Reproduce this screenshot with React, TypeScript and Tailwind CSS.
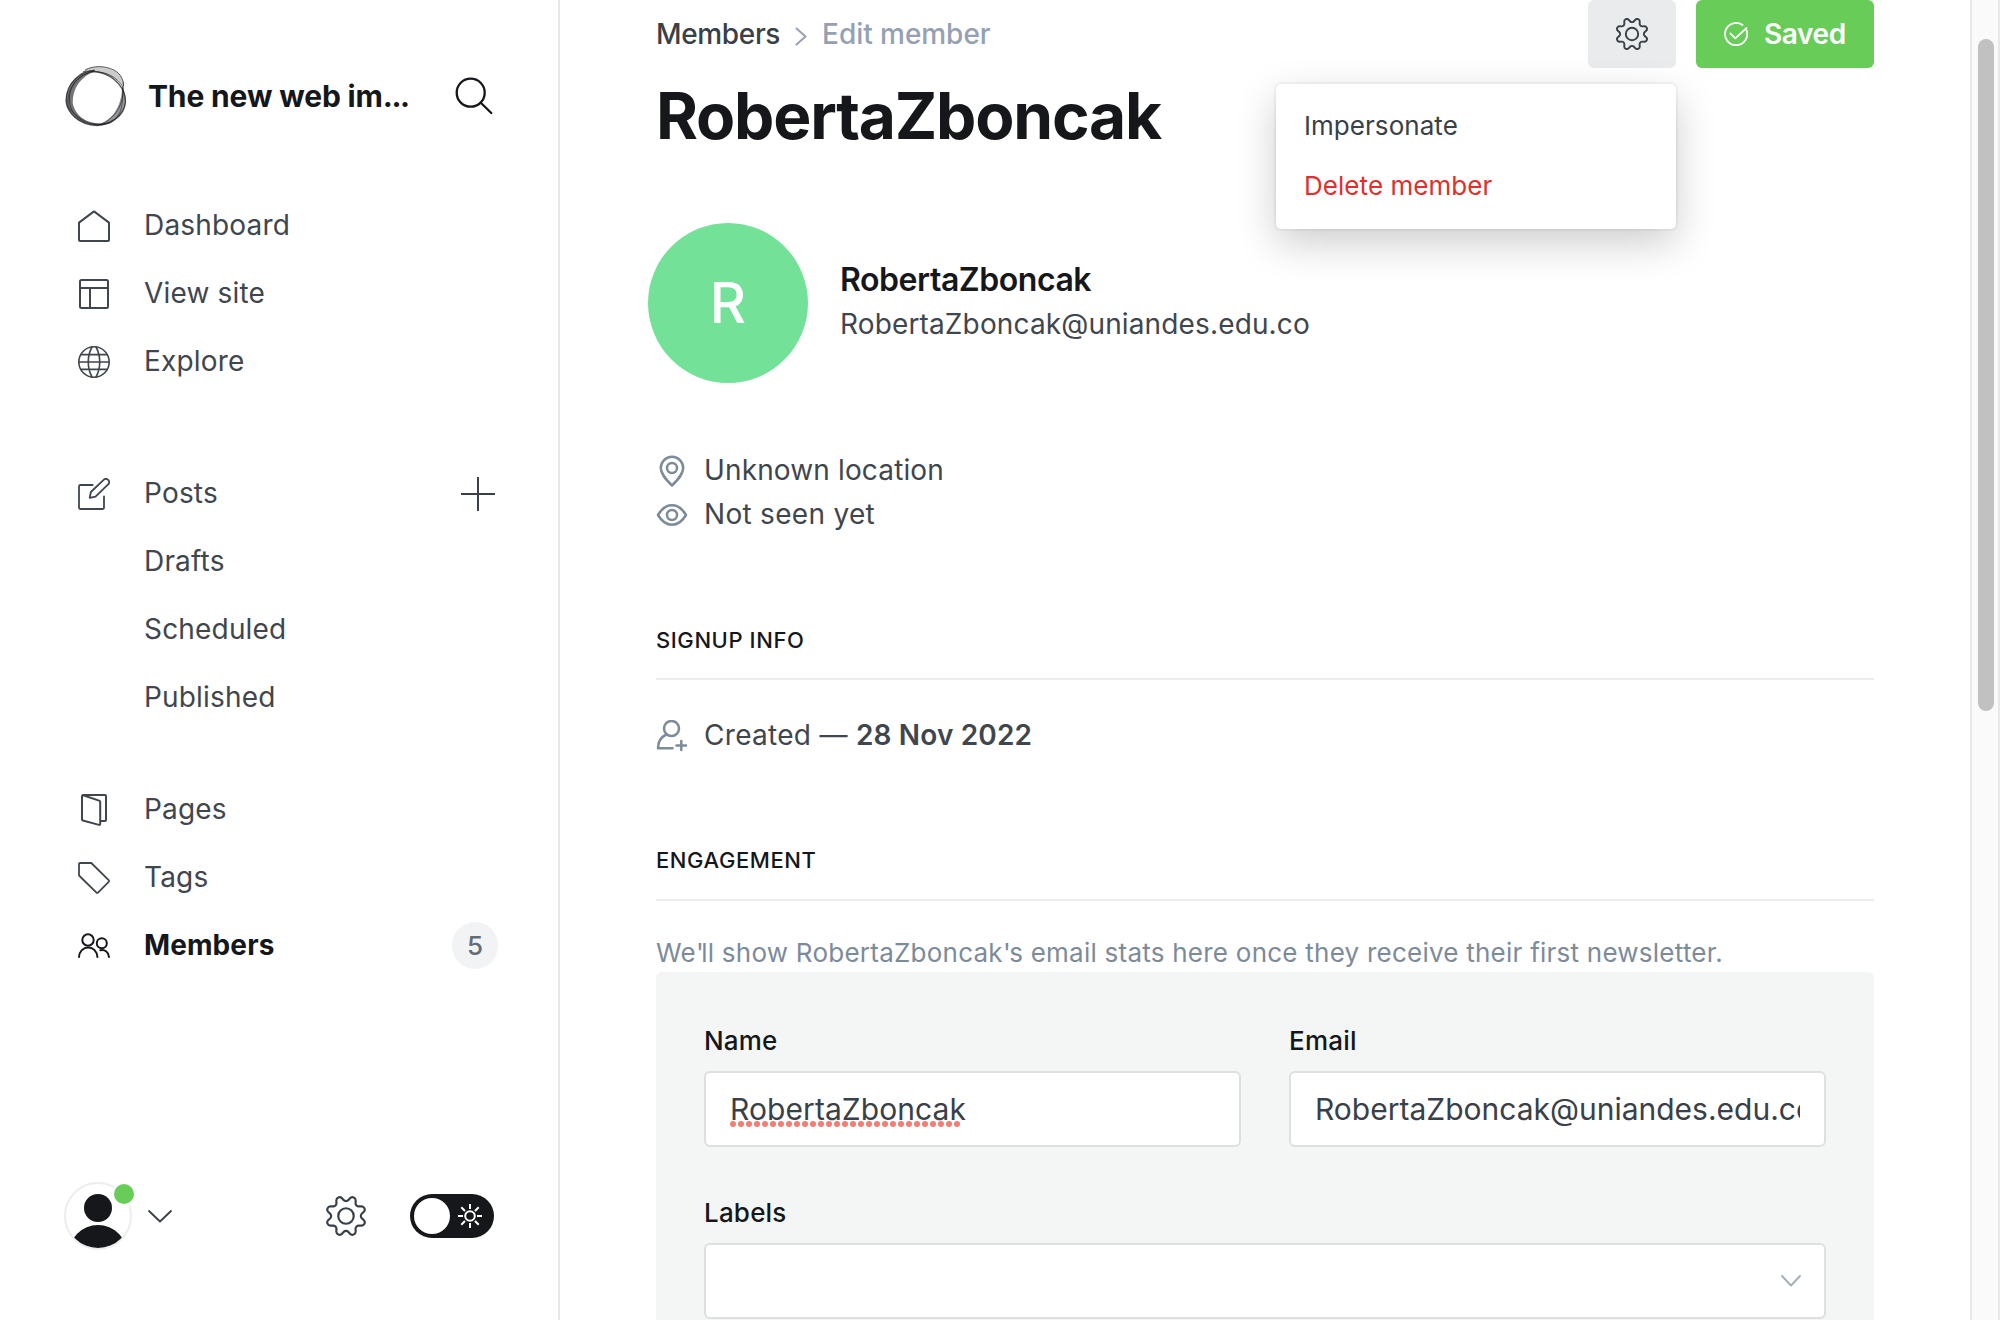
import type { ReactNode } from "react";

const COG =
  "M10.546,2.438a1.957,1.957,0,0,0,2.908,0L14.4,1.4a1.959,1.959,0,0,1,3.41,1.413l-.071,1.4A1.958,1.958,0,0,0,19.79,6.265l1.4-.071A1.959,1.959,0,0,1,22.6,9.6l-1.04.942a1.962,1.962,0,0,0,0,2.909l1.04.942a1.959,1.959,0,0,1-1.413,3.41l-1.4-.071a1.958,1.958,0,0,0-2.056,2.056l.071,1.4A1.959,1.959,0,0,1,14.4,22.6l-.941-1.041a1.959,1.959,0,0,0-2.908,0L9.606,22.6A1.959,1.959,0,0,1,6.2,21.192l.072-1.4a1.958,1.958,0,0,0-2.056-2.056l-1.4.071A1.958,1.958,0,0,1,1.4,14.4l1.041-.942a1.96,1.96,0,0,0,0-2.909L1.4,9.606A1.958,1.958,0,0,1,2.813,6.2l1.4.071A1.958,1.958,0,0,0,6.269,4.211L6.2,2.809A1.959,1.959,0,0,1,9.606,1.4Z";

function Cog({ className, stroke }: { className: string; stroke: number }) {
  return (
    <svg viewBox="0 0 24 24" className={className} fill="none" stroke="currentColor" strokeWidth={stroke} strokeLinejoin="round">
      <path d={COG} />
      <circle cx="12" cy="12" r="4.650" />
    </svg>
  );
}

function NavSvg({ children }: { children: ReactNode }) {
  return (
    <svg viewBox="0 0 32 32" className="h-8 w-8" fill="none" stroke="currentColor" strokeWidth="2" strokeLinecap="round" strokeLinejoin="round">
      {children}
    </svg>
  );
}

const HomeIcon = (
  <NavSvg>
    <path d="M1 12.6 16 1.4 31 12.6V30a1 1 0 0 1-1 1H2a1 1 0 0 1-1-1Z" />
  </NavSvg>
);
const LayoutIcon = (
  <NavSvg>
    <rect x="2" y="2" width="28" height="28" rx="1.5" />
    <path d="M2 10h28M12 10v20" />
  </NavSvg>
);
const GlobeIcon = (
  <NavSvg>
    <g strokeWidth="1.6">
      <circle cx="16" cy="16" r="15.200" />
      <path d="M14 1C9 10 9 22 14 31M18 1c5 9 5 21 0 30M1 16h30M3 8.600h26M3 23.400h26" />
    </g>
  </NavSvg>
);
const PencilIcon = (
  <NavSvg>
    <g strokeWidth="1.800">
      <path d="M14.600 7H2.500A1.500 1.500 0 0 0 1 8.500V29.500A1.500 1.500 0 0 0 2.500 31H24.500A1.500 1.500 0 0 0 26 29.500V18.500" />
      <path d="m17.500 18.600-5.800 1.200 1.200-5.800L25.600 1.900a3.100 3.100 0 0 1 4.500 4.500Z" />
    </g>
  </NavSvg>
);
const PagesIcon = (
  <NavSvg>
    <path d="M23 27h4a1 1 0 0 0 1-1V2a1 1 0 0 0-1-1H5" />
    <path d="M4 2.300V25.500a1 1 0 0 0 .8 1l16.200 4.400a1 1 0 0 0 1.200-1V8a1.500 1.500 0 0 0-1.100-1.400L5.200 1.200A1 1 0 0 0 4 2.300Z" />
  </NavSvg>
);
const TagIcon = (
  <NavSvg>
    <g strokeWidth="1.800">
      <path d="M2 1h11.300L30.700 18.200a1.200 1.200 0 0 1 0 1.700L20 30.600a1 1 0 0 1-1.500 0L1.500 14A1.500 1.500 0 0 1 1 13V2A1 1 0 0 1 2 1Z" />
    </g>
  </NavSvg>
);
const MembersIcon = (
  <NavSvg>
    <circle cx="10" cy="10" r="5.700" />
    <path d="M1 27c.3-5.500 4.200-9.600 9.200-9.600s8.900 4.100 9.200 9.600" />
    <circle cx="23.800" cy="13.300" r="5" />
    <path d="M22.300 20.300c4.800-1 8.400 2 8.700 6.700" />
  </NavSvg>
);

function NavItem({ icon, label, active, trailing }: { icon?: ReactNode; label: string; active?: boolean; trailing?: ReactNode }) {
  return (
    <li className={active ? "flex h-[68px] items-center pl-[78px] text-[#15171a]" : "flex h-[68px] items-center pl-[78px] text-[#3f464e]"}>
      <span className="mt-0.5 h-8 w-8 shrink-0">{icon}</span>
      <span className={active ? "ml-[34px] grow font-bold tracking-[0.1px]" : "ml-[34px] grow tracking-[0.18px]"}>{label}</span>
      {trailing}
    </li>
  );
}

function OrbLogo() {
  return (
    <svg viewBox="0 0 64 64" className="h-16 w-16" fill="none" stroke="#15171a">
      <g fill="#15171a" stroke="none">
        <path
          fillOpacity=".6"
          d="M31 6.500C18 6 2 18 2 37C3 48 14 61 33 61.500C40 61 45 59 50 55C42 60 36 60 30 59C18 58 9 46 8.700 38C9 24 16 14 31 6.500Z"
        />
        <path fillOpacity=".22" d="M21 5.500C30 1 40 1 50 6C58 10 60 16 60 22C56 18 50 10 31 8Z" />
        <path fillOpacity=".45" d="M58 22C64 34 64 48 51 56.500C46 60.500 40 61.500 33 61.500C45 58 58 46 58 22Z" />
      </g>
      <g strokeWidth=".9" strokeOpacity=".7">
        <path d="M21 6C30 1.500 40 1.500 50 6C57 10 59.500 16 59.500 22" />
        <path d="M31 6.500C18 6 2 18 2 37C3 48 14 61 33 61.500C46 61 60 52 61.500 38C61.500 26 53 12 34 8C28 7 24 6 19 8" strokeWidth="1.300" />
        <path d="M5.500 38C4 22 14 10 30 8C42 7 54 14 59 23C60 40 52 54 36 60.500C20 61 7 52 5.500 38Z" />
        <path d="M59.500 18C58 40 60 50 46 59C32 63 12 56 4 42C2 26 14 10 30 7" strokeWidth=".7" />
      </g>
    </svg>
  );
}

function Sidebar() {
  return (
    <nav className="flex h-full w-[560px] shrink-0 flex-col border-r-2 border-[#e7e8e9] text-[28px]">
      <header className="mt-16 flex h-16 items-center pl-16">
        <OrbLogo />
        <div className="ml-5 w-[262px] text-[30px] font-bold tracking-[-0.15px] whitespace-nowrap text-[#15171a]">
          The new web im<span className="tracking-[-1.4px]">...</span>
        </div>
        <svg viewBox="0 0 40 40" className="ml-[44px] h-10 w-10" fill="none" stroke="#15171a" strokeWidth="2.300" strokeLinecap="round">
          <circle cx="16.700" cy="16.700" r="14" />
          <path d="m27 27 10.300 10" />
        </svg>
      </header>
      <ul className="mt-[63px]">
        <NavItem icon={HomeIcon} label="Dashboard" />
        <NavItem icon={LayoutIcon} label="View site" />
        <NavItem icon={GlobeIcon} label="Explore" />
      </ul>
      <ul className="mt-16">
        <NavItem
          icon={PencilIcon}
          label="Posts"
          trailing={
            <svg viewBox="0 0 34 34" className="mt-0.5 mr-[63px] h-[34px] w-[34px]" stroke="#394047" strokeWidth="2">
              <path d="M17 0v34M0 17h34" />
            </svg>
          }
        />
        <NavItem label="Drafts" />
        <NavItem label="Scheduled" />
        <NavItem label="Published" />
      </ul>
      <ul className="mt-11">
        <NavItem icon={PagesIcon} label="Pages" />
        <NavItem icon={TagIcon} label="Tags" />
        <NavItem
          icon={MembersIcon}
          label="Members"
          active
          trailing={
            <span className="mt-px mr-[60px] flex h-[47px] w-[46px] items-center justify-center rounded-full bg-[#f1f3f4] text-[26px] font-medium text-[#626d79]">
              5
            </span>
          }
        />
      </ul>
      <footer className="mt-auto mb-[70px] flex h-[68px] items-center pl-16">
        <svg viewBox="0 0 70 68" className="h-[68px] w-[70px] shrink-0">
          <defs>
            <clipPath id="face">
              <circle cx="34" cy="34" r="32" />
            </clipPath>
          </defs>
          <circle cx="34" cy="34" r="33" fill="#fff" stroke="#ebedef" strokeWidth="2" />
          <circle cx="34" cy="26" r="14" fill="#15171a" />
          <circle cx="34" cy="72.500" r="29.500" fill="#15171a" clipPath="url(#face)" />
          <circle cx="60" cy="12" r="12" fill="#fff" />
          <circle cx="60" cy="12" r="10" fill="#68cc59" />
        </svg>
        <svg viewBox="0 0 24 14" className="ml-[14px] h-[14px] w-6" fill="none" stroke="#394047" strokeWidth="1.800" strokeLinecap="round" strokeLinejoin="round">
          <path d="m1 2 11 10.500L23 2" />
        </svg>
        <Cog className="ml-[154px] h-10 w-10 text-[#394047]" stroke={1.3} />
        <span className="ml-11 flex h-11 w-[84px] items-center rounded-full bg-[#15171a] pl-1">
          <span className="h-9 w-9 rounded-full bg-white" />
          <svg viewBox="0 0 24 24" className="ml-2 h-6 w-6" fill="none" stroke="#fff" strokeWidth="2">
            <circle cx="12" cy="12" r="4.800" />
            <path d="M12 0v5M12 19v5M0 12h5M19 12h5M3.300 3.300l3.700 3.700M17 17l3.700 3.700M3.300 20.700 7 17M17 7l3.700-3.700" />
          </svg>
        </span>
      </footer>
    </nav>
  );
}

function ActionsMenu() {
  return (
    <div className="absolute top-[84px] left-[1276px] h-[145px] w-[400px] rounded-[5px] bg-white pt-[11px] text-[26px] tracking-[0.05px] shadow-[0_0_0_2px_rgba(0,0,0,0.04),0_14px_40px_0_rgba(0,0,0,0.2)]">
      <div className="flex h-[60px] items-center pl-7 text-[#394047]">Impersonate</div>
      <div className="flex h-[60px] items-center pl-7 text-[#e02f2c]">Delete member</div>
    </div>
  );
}

function Meta({ icon, children }: { icon: ReactNode; children: ReactNode }) {
  return (
    <div className="flex h-11 items-center text-[28px] tracking-[0.2px] text-[#3f464e]">
      <svg viewBox="0 0 32 32" className="mt-0.5 mr-4 h-8 w-8 shrink-0" fill="none" stroke="#7c8b9a" strokeWidth="2.500" strokeLinecap="round" strokeLinejoin="round">
        {icon}
      </svg>
      <span>{children}</span>
    </div>
  );
}

function SectionTitle({ children, className }: { children: ReactNode; className: string }) {
  return (
    <h4 className={"flex h-[76px] items-start border-b-2 border-[#ebeced] text-[22px] leading-[40px] font-medium tracking-[0.58px] text-[#15171a] " + className}>
      {children}
    </h4>
  );
}

function Label({ children }: { children: ReactNode }) {
  return <div className="flex h-[38px] items-center text-[26px] font-medium tracking-[0.2px] text-[#15171a]">{children}</div>;
}

function Main() {
  return (
    <main className="h-full w-[1410px] shrink-0 overflow-hidden pr-24 pl-24">
      <header className="flex h-[68px] items-center text-[28px] font-medium">
        <span className="tracking-[-0.35px] text-[#394047]">Members</span>
        <svg viewBox="0 0 12 20" className="mx-[15px] mt-1 h-5 w-3" fill="none" stroke="#95a1b2" strokeWidth="2" strokeLinecap="round" strokeLinejoin="round">
          <path d="m1.500 2.500 9 8-9 8" />
        </svg>
        <span className="tracking-[-0.05px] text-[#95a1b2]">Edit member</span>
        <span className="ml-auto flex h-[68px] w-[88px] items-center justify-center rounded-[6px] bg-[#e9ebed]">
          <Cog className="h-8 w-8 text-[#394047]" stroke={1.45} />
        </span>
        <span className="ml-5 flex h-[68px] w-[178px] items-center rounded-[6px] bg-[#68cc59] pl-7 font-semibold tracking-[-0.4px] text-white">
          <svg viewBox="0 0 24 24" className="mr-4 h-6 w-6" fill="none" stroke="#fff" strokeWidth="1.800" strokeLinecap="round" strokeLinejoin="round">
            <path d="M22.500 8.200A11.100 11.100 0 1 1 18.500 3" />
            <path d="m6.300 11.500 5 4.800L22.500 6" />
          </svg>
          Saved
        </span>
      </header>
      <h1 className="flex h-24 items-center text-[64px] font-bold tracking-[-1.200px] text-[#15171a]">RobertaZboncak</h1>

      <section className="mt-[59px] -ml-2 flex h-40 items-center">
        <div className="flex h-40 w-40 items-center justify-center rounded-full bg-[#74e198] text-[56px] font-medium text-white">R</div>
        <div className="ml-8 pb-0.5">
          <h3 className="flex h-11 items-center text-[32px] font-semibold tracking-[-0.450px] text-[#15171a]">RobertaZboncak</h3>
          <p className="flex h-11 items-center text-[28px] tracking-[0.14px] text-[#3f464e]">RobertaZboncak@uniandes.edu.co</p>
        </div>
      </section>

      <section className="mt-[65px]">
        <Meta
          icon={
            <>
              <path d="M16 30.500C9 23.500 4.800 18.500 4.800 13a11.200 11.200 0 0 1 22.400 0c0 5.500-4.200 10.500-11.200 17.500Z" />
              <circle cx="16" cy="13" r="5" />
            </>
          }
        >
          <span className="tracking-[0.14px]">Unknown location</span>
        </Meta>
        <Meta
          icon={
            <>
              <path d="M2 16C5.500 10 10.500 6.300 16 6.300S26.500 10 30 16c-3.500 6-8.500 9.700-14 9.700S5.500 22 2 16Z" />
              <circle cx="16" cy="16" r="5" />
            </>
          }
        >
          <span className="tracking-[0.3px]">Not seen yet</span>
        </Meta>
      </section>

      <section className="mt-[68px]">
        <SectionTitle className="pt-4">SIGNUP INFO</SectionTitle>
        <div className="mt-[33px]">
          <Meta
            icon={
              <>
                <circle cx="15.500" cy="8.500" r="7.500" />
                <path d="M10.500 14.500C5 17 2 21.500 2 28.300h14.500M20.500 25.500h9.500M25.300 21v9" />
              </>
            }
          >
            <span className="tracking-[0.3px]">Created — </span>
            <b className="font-semibold tracking-[0.15px]">28 Nov 2022</b>
          </Meta>
        </div>
      </section>

      <section className="mt-[68px]">
        <SectionTitle className="pt-[15px]">ENGAGEMENT</SectionTitle>
        <p className="mt-8 h-[39px] text-[26px] leading-10 tracking-[0.24px] text-[#7c8b9a]">
          We<span className="tracking-[-2.5px]">'</span>ll show RobertaZboncak<span className="tracking-[-1.5px]">'</span>s email stats here once they
          receive their first newsletter.
        </p>
      </section>

      <section className="h-[400px] rounded-t-[6px] bg-[#f4f6f6] px-12 pt-[49px]">
        <div className="grid grid-cols-2 gap-12">
          <div>
            <Label>Name</Label>
            <div className="mt-3 flex h-[76px] items-center rounded-[6px] border-2 border-[#dddfe0] bg-white px-6 text-[30px] tracking-[0.08px] text-[#394047]">
              <span className="relative">
                RobertaZboncak
                <svg className="absolute top-[33.5px] left-0 h-2 w-[240px]" fill="none" stroke="#f27d72" strokeWidth="6" strokeLinecap="round" strokeDasharray="0 8">
                  <path d="M3 4h224.500" />
                </svg>
              </span>
            </div>
          </div>
          <div>
            <Label>Email</Label>
            <div className="mt-3 flex h-[76px] items-center rounded-[6px] border-2 border-[#dddfe0] bg-white px-6 text-[30px] text-[#394047]">
              <span className="w-full overflow-hidden whitespace-nowrap">RobertaZboncak@uniandes.edu.co</span>
            </div>
          </div>
        </div>
        <div className="mt-[46px]">
          <Label>Labels</Label>
          <div className="mt-3 flex h-[76px] items-center justify-end rounded-[6px] border-2 border-[#dddfe0] bg-white px-[22px]">
            <svg viewBox="0 0 22 14" className="h-[14px] w-[22px]" fill="none" stroke="#a6b0ba" strokeWidth="2" strokeLinecap="round" strokeLinejoin="round">
              <path d="m2 2 9 9.500L20 2" />
            </svg>
          </div>
        </div>
      </section>
    </main>
  );
}

export default function App() {
  return (
    <div className="relative flex h-[1320px] w-[2000px] overflow-hidden bg-white font-['Inter',sans-serif] antialiased">
      <Sidebar />
      <Main />
      <aside className="flex h-full w-[30px] shrink-0 border-r-2 border-l-2 border-[#e8e8e8] bg-[#fafafa] pt-[39px] pl-1.5">
        <div className="h-[672px] w-4 rounded-full bg-[#c1c1c1]" />
      </aside>
      <ActionsMenu />
    </div>
  );
}
